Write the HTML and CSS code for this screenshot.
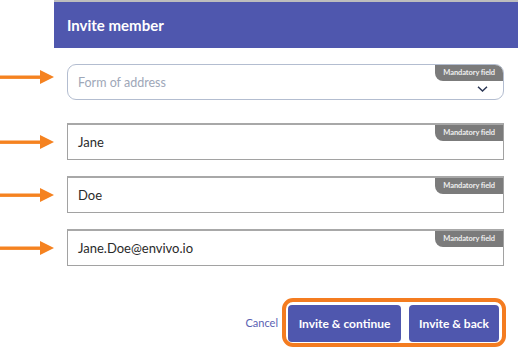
FILE: index.html
```html
<!DOCTYPE html>
<html lang="en">
<head>
    <meta charset="UTF-8">
    <meta name="viewport" content="width=device-width, initial-scale=1.0">
    <title>Invite member</title>
    <link rel="stylesheet" href="styles.css">
</head>
<body>
    <div class="screen">
        <div class="header-row">
            <div class="gutter"></div>
            <h1 class="dialog-title">Invite member</h1>
        </div>

        <!-- form of address -->
        <div class="form-row first">
            <svg class="arrow arrow-top" viewBox="0 0 54 14" width="54" height="14"><rect x="0" y="5.5" width="42" height="3.4" fill="#f58220"/><polygon points="40,0 54,7 40,14" fill="#f58220"/></svg>
            <div class="field-wrap">
                <div class="select-field">
                    <span class="placeholder">Form of address</span>
                    <span class="badge">Mandatory field</span>
                    <svg class="chevron" viewBox="0 0 11 6" width="11" height="6"><polyline points="1,0.8 5.5,5 10,0.8" fill="none" stroke="#2d3856" stroke-width="1.5"/></svg>
                </div>
            </div>
        </div>

        <div class="form-row second">
            <svg class="arrow" viewBox="0 0 54 14" width="54" height="14"><rect x="0" y="5.5" width="42" height="3.4" fill="#f58220"/><polygon points="40,0 54,7 40,14" fill="#f58220"/></svg>
            <div class="field-wrap">
                <div class="text-field">
                    <span class="value">Jane</span>
                    <span class="badge">Mandatory field</span>
                </div>
            </div>
        </div>

        <div class="form-row">
            <svg class="arrow" viewBox="0 0 54 14" width="54" height="14"><rect x="0" y="5.5" width="42" height="3.4" fill="#f58220"/><polygon points="40,0 54,7 40,14" fill="#f58220"/></svg>
            <div class="field-wrap">
                <div class="text-field">
                    <span class="value">Doe</span>
                    <span class="badge">Mandatory field</span>
                </div>
            </div>
        </div>

        <div class="form-row">
            <svg class="arrow" viewBox="0 0 54 14" width="54" height="14"><rect x="0" y="5.5" width="42" height="3.4" fill="#f58220"/><polygon points="40,0 54,7 40,14" fill="#f58220"/></svg>
            <div class="field-wrap">
                <div class="text-field">
                    <span class="value">Jane.Doe@envivo.io</span>
                    <span class="badge">Mandatory field</span>
                </div>
            </div>
        </div>

        <div class="actions">
            <a class="cancel">Cancel</a>
            <div class="highlight">
                <button class="btn btn-continue">Invite &amp; continue</button>
                <button class="btn btn-back">Invite &amp; back</button>
            </div>
        </div>
    </div>
</body>
</html>
```

FILE: styles.css
```css
body {
    margin: 0;
    background: #fff;
    font-family: Lato, 'Open Sans', sans-serif;
}
.screen {
    width: 518px;
    height: 355px;
    overflow: hidden;
}
.header-row {
    display: flex;
}
.gutter {
    width: 54px;
    flex-shrink: 0;
}
.dialog-title {
    flex: 1;
    margin: 0;
    height: 46px;
    line-height: 46px;
    padding-left: 13px;
    border-top: 2px solid #bdbdbd;
    background-color: #4f57ae;
    color: #fff;
    font-size: 15px;
    font-weight: bold;
}
.form-row {
    display: flex;
    align-items: center;
    margin-top: 16px;
}
.form-row.first {
    align-items: flex-start;
}
.form-row.second {
    margin-top: 23px;
}
.arrow {
    flex-shrink: 0;
    display: block;
}
.arrow-top {
    margin-top: 6px;
}
.field-wrap {
    flex: 1;
    padding: 0 14px 0 13px;
}
.select-field,
.text-field {
    position: relative;
    box-sizing: border-box;
    display: flex;
    align-items: center;
    padding-left: 10px;
}
.select-field {
    height: 36px;
    border: 1.5px solid #b3bdd0;
    border-radius: 9px;
    overflow: hidden;
}
.text-field {
    height: 37px;
    border: 1px solid #a2a2a2;
    border-top: 2px solid #a8a8a8;
}
.placeholder {
    color: #9ea7b8;
    font-size: 12.5px;
}
.value {
    color: #2a2a2a;
    font-size: 13px;
}
.badge {
    position: absolute;
    top: 0;
    right: 0;
    height: 16px;
    line-height: 16px;
    padding: 0 8px;
    background-color: #7b7b7b;
    color: #eee;
    font-size: 7.5px;
    font-weight: bold;
    border-bottom-left-radius: 8px;
    letter-spacing: -0.1px;
}
.chevron {
    position: absolute;
    right: 15px;
    bottom: 7px;
}
.actions {
    display: flex;
    justify-content: flex-end;
    align-items: center;
    gap: 4px;
    margin-top: 32px;
    padding-right: 12px;
}
.cancel {
    color: #5a61b2;
    font-size: 11px;
    cursor: pointer;
}
.highlight {
    display: flex;
    gap: 8px;
    padding: 3px 3px 1px 2px;
    border: 4px solid #f47c20;
    border-radius: 11px;
    background: #fff;
}
.btn {
    height: 37px;
    border: none;
    border-radius: 4px;
    background-color: #4f57ae;
    color: #fff;
    font-family: Lato, 'Open Sans', sans-serif;
    font-size: 12px;
    font-weight: bold;
    cursor: pointer;
    padding: 0;
}
.btn-continue {
    width: 113px;
}
.btn-back {
    width: 90px;
}
```
